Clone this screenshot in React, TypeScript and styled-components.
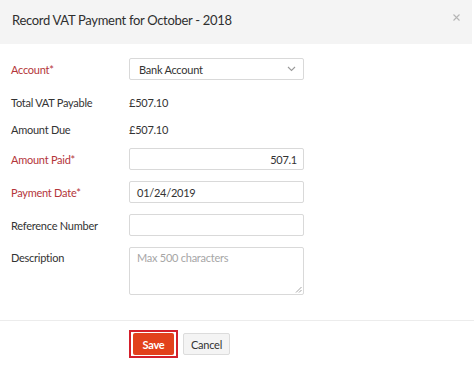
import styled, { createGlobalStyle } from 'styled-components'

const GlobalStyle = createGlobalStyle`
  html, body {
    margin: 0;
    padding: 0;
    background: #ffffff;
  }
  body {
    font-family: Lato, "Open Sans", "Liberation Sans", sans-serif;
    color: #333333;
    -webkit-font-smoothing: antialiased;
  }
  * {
    box-sizing: border-box;
  }
`

export default function App() {
  return (
    <>
      <GlobalStyle />
      <Modal>
        <Header>
          <Title>Record VAT Payment for October - 2018</Title>
          <Close aria-label="close">
            <svg width="7" height="7" viewBox="0 0 7 7">
              <path d="M0.5 0.5 L6.5 6.5 M6.5 0.5 L0.5 6.5" stroke="#b5b5b5" strokeWidth="1.1" />
            </svg>
          </Close>
        </Header>

        <Form>
          <Row $after={3}>
            <Label $required>Account*</Label>
            <Select>
              <span>Bank Account</span>
              <svg width="9" height="6" viewBox="0 0 9 6">
                <path d="M1 1 L4.5 4.5 L8 1" fill="none" stroke="#9a9a9a" strokeWidth="1.1" />
              </svg>
            </Select>
          </Row>
          <StaticRow>
            <Label>Total VAT Payable</Label>
            <Value>£507.10</Value>
          </StaticRow>
          <StaticRow>
            <Label>Amount Due</Label>
            <Value>£507.10</Value>
          </StaticRow>
          <Row>
            <Label $required>Amount Paid*</Label>
            <Input $align="right">507.1</Input>
          </Row>
          <Row>
            <Label $required>Payment Date*</Label>
            <Input>01/24/2019</Input>
          </Row>
          <Row>
            <Label>Reference Number</Label>
            <Input />
          </Row>
          <Row $top>
            <Label $top>Description</Label>
            <TextArea>
              <Placeholder>Max 500 characters</Placeholder>
              <Grip width="7" height="7" viewBox="0 0 7 7">
                <path d="M6.5 1 L1 6.5 M6.5 4 L4 6.5" stroke="#9a9a9a" strokeWidth="0.9" />
              </Grip>
            </TextArea>
          </Row>
        </Form>

        <Footer>
          <Focus>
            <SaveButton>Save</SaveButton>
          </Focus>
          <CancelButton>Cancel</CancelButton>
        </Footer>
      </Modal>
    </>
  )
}

const Modal = styled.div`
  width: 474px;
  height: 367px;
  background: #ffffff;
  display: flex;
  flex-direction: column;
`

const Header = styled.header`
  height: 44px;
  width: 472px;
  background: #f4f4f4;
  display: flex;
  align-items: center;
  justify-content: space-between;
  padding: 0 13px 4px 12px;
`

const Title = styled.h1`
  margin: 0;
  font-size: 13px;
  font-weight: 400;
  letter-spacing: -0.3px;
  color: #2f2f2f;
`

const Close = styled.span`
  display: flex;
  margin-top: -6px;
  margin-right: -1px;
`

const Form = styled.div`
  display: flex;
  flex-direction: column;
  gap: 11px;
  padding: 14px 0 25px 11px;
  border-bottom: 1px solid #ececec;
  font-size: 11px;
  letter-spacing: -0.25px;
`

const Row = styled.div<{ $after?: number; $top?: boolean }>`
  display: grid;
  grid-template-columns: 118px 175px;
  align-items: ${p => (p.$top ? 'start' : 'center')};
  margin-bottom: ${p => p.$after || 0}px;
`

const StaticRow = styled(Row)`
  height: 16px;
`

const Label = styled.label<{ $required?: boolean; $top?: boolean }>`
  color: ${p => (p.$required ? '#b4353a' : '#333333')};
  padding-top: ${p => (p.$top ? '4px' : '0')};
`

const Value = styled.span`
  color: #333333;
`

const Select = styled.div`
  height: 22px;
  border: 1px solid #d9d9d9;
  border-radius: 2px;
  display: flex;
  align-items: center;
  justify-content: space-between;
  padding: 0 7px 0 9px;
  color: #333333;
  background: #ffffff;
`

const Input = styled.div<{ $align?: 'left' | 'right' }>`
  height: 22px;
  border: 1px solid #d9d9d9;
  border-radius: 2px;
  display: flex;
  align-items: center;
  justify-content: ${p => (p.$align === 'right' ? 'flex-end' : 'flex-start')};
  padding: 0 6px 0 7px;
  color: #333333;
`

const TextArea = styled.div`
  position: relative;
  height: 48px;
  border: 1px solid #d9d9d9;
  border-radius: 2px;
  padding: 3px 7px;
`

const Placeholder = styled.span`
  color: #a6a6a6;
`

const Grip = styled.svg`
  position: absolute;
  right: 1px;
  bottom: 1px;
`

const Footer = styled.div`
  display: flex;
  align-items: center;
  gap: 5px;
  padding: 9px 0 0 129px;
`

const Focus = styled.div`
  border: 2px solid #d41f2b;
  padding: 1px 2px;
  display: flex;
`

const SaveButton = styled.button`
  height: 22px;
  width: 41px;
  border: none;
  border-radius: 2px;
  background: #e2411c;
  color: #ffffff;
  font-family: inherit;
  font-size: 11px;
  letter-spacing: -0.25px;
  font-weight: 700;
  padding: 0;
`

const CancelButton = styled.button`
  height: 22px;
  width: 47px;
  border: 1px solid #dcdcdc;
  border-radius: 2px;
  background: #f4f4f4;
  color: #333333;
  font-family: inherit;
  font-size: 11px;
  letter-spacing: -0.25px;
  padding: 0;
`
